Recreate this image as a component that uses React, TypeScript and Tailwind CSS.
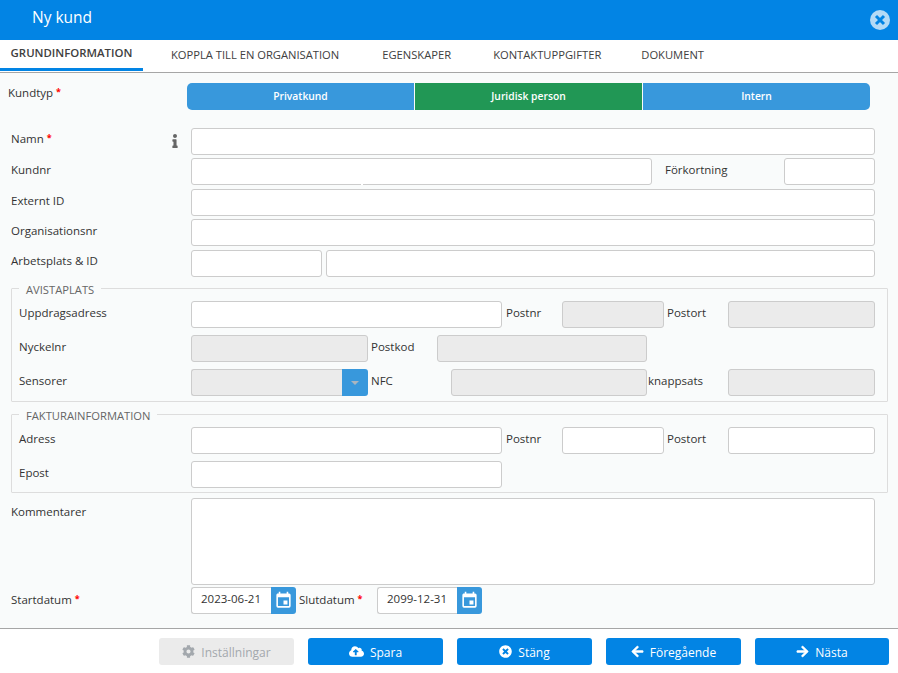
import React from 'react';
import { FaInfo, FaCog, FaCloudUploadAlt, FaTimesCircle, FaArrowLeft, FaArrowRight } from 'react-icons/fa';

const inputCls = 'h-[27px] rounded-[3px] border border-[#cccccc] bg-white';
const disabledCls = 'h-[27px] rounded-[3px] border border-[#cccccc] bg-[#ebebeb]';

function Req() {
  return <span className="ml-[3px] align-[2px] text-[9px] leading-none font-bold text-[#ff0000]">*</span>;
}

function CalendarButton() {
  return (
    <span className="flex h-[27px] w-[25px] shrink-0 items-center justify-center rounded-r-[3px] bg-[#3898dc]">
      <svg viewBox="0 0 24 24" className="h-[19px] w-[19px] fill-white">
        <path d="M19 19H5V8h14m-3-7v2H8V1H6v2H5c-1.11 0-2 .89-2 2v14a2 2 0 0 0 2 2h14a2 2 0 0 0 2-2V5a2 2 0 0 0-2-2h-1V1m-1 11h-5v5h5v-5z" />
      </svg>
    </span>
  );
}

function DateField({ value }: { value: string }) {
  return (
    <div className="flex">
      <div className="flex h-[27px] w-[80px] items-center rounded-l-[3px] border border-r-0 border-[#cccccc] bg-white pb-[4px] pl-[9px] text-[#333333]">
        {value}
      </div>
      <CalendarButton />
    </div>
  );
}

function FooterButton({ icon, label, width, disabled }: { icon: React.ReactNode; label: string; width: string; disabled?: boolean }) {
  return (
    <button
      className={
        disabled
          ? `flex h-[27px] ${width} items-center justify-center gap-[6px] rounded-[3px] bg-[#ebebeb] text-[12px] text-[#a3a8ad]`
          : `flex h-[27px] ${width} items-center justify-center gap-[6px] rounded-[3px] bg-[#0284e4] text-[12px] text-white`
      }
    >
      {icon}
      <span className="pt-[2px]">{label}</span>
    </button>
  );
}

export default function App() {
  return (
    <div className="flex h-[673px] w-[898px] flex-col overflow-hidden bg-white text-[11.5px] text-[#333333] [font-family:'Open_Sans','Noto_Sans',sans-serif]">
      <div className="flex h-[40px] shrink-0 items-start justify-between bg-[#0284e4] pl-[32px] pr-[8px]">
        <span className="mt-[7px] text-[15.5px] leading-[20px] text-white">Ny kund</span>
        <span className="mt-[10px] flex h-[20px] w-[20px] items-center justify-center rounded-full bg-[#b4daf6]">
          <svg viewBox="0 0 12 12" className="h-[12px] w-[12px] stroke-[#0284e4] [stroke-width:3]">
            <path d="M2 2l8 8M10 2l-8 8" />
          </svg>
        </span>
      </div>

      <div className="flex h-[33px] shrink-0 border-b border-[#a6a6a6] text-[11.2px] text-[#404040]">
        <div className="flex h-[31px] w-[143px] items-center justify-center border-b-[3px] border-[#0284e4] pb-[2px] text-[11.4px] font-semibold">
          GRUNDINFORMATION
        </div>
        <div className="ml-[28px] flex h-[31px] items-center">KOPPLA TILL EN ORGANISATION</div>
        <div className="ml-[43px] flex h-[31px] items-center">EGENSKAPER</div>
        <div className="ml-[42px] flex h-[31px] items-center">KONTAKTUPPGIFTER</div>
        <div className="ml-[40px] flex h-[31px] items-center">DOKUMENT</div>
      </div>

      <div className="flex-1 border-b border-[#a6a6a6] bg-[#f9fbfb]">
        <div className="mt-[10px] flex h-[27px]">
          <div className="w-[187px] pl-[8px] leading-[20px]">
            Kundtyp
            <Req />
          </div>
          <div className="flex w-[683px] text-[10.3px] font-semibold text-white">
            <div className="flex flex-1 items-center justify-center rounded-l-[5px] bg-[#3898dc]">Privatkund</div>
            <div className="ml-px flex flex-1 items-center justify-center bg-[#219755]">Juridisk person</div>
            <div className="ml-px flex flex-1 items-center justify-center rounded-r-[5px] bg-[#3898dc]">Intern</div>
          </div>
        </div>

        <div className="mt-[18px] flex">
          <div className="flex w-[191px] justify-between pl-[11px] pr-[12px] leading-[21px]">
            <span>
              Namn
              <Req />
            </span>
            <FaInfo className="mt-[6px] h-[14px] w-[8px] text-[#666666]" />
          </div>
          <div className={`${inputCls} w-[684px]`} />
        </div>

        <div className="mt-[3px] flex">
          <div className="w-[191px] pl-[11px] leading-[23px]">Kundnr</div>
          <div className={`${inputCls} relative w-[461px]`}>
            <span className="absolute bottom-[-1px] left-[169px] h-px w-[2px] bg-white" />
          </div>
          <div className="ml-[13px] w-[119px] leading-[23px]">Förkortning</div>
          <div className={`${inputCls} w-[91px]`} />
        </div>

        <div className="mt-[4px] flex">
          <div className="w-[191px] pl-[11px] leading-[23px]">Externt ID</div>
          <div className={`${inputCls} w-[684px]`} />
        </div>

        <div className="mt-[3px] flex">
          <div className="w-[191px] pl-[11px] leading-[23px]">Organisationsnr</div>
          <div className={`${inputCls} w-[684px]`} />
        </div>

        <div className="mt-[4px] flex">
          <div className="w-[191px] pl-[11px] leading-[22px]">Arbetsplats &amp; ID</div>
          <div className={`${inputCls} w-[131px]`} />
          <div className={`${inputCls} ml-[4px] w-[549px]`} />
        </div>

        <fieldset className="ml-[11px] mt-[1px] h-[124px] w-[877px] rounded-[1px] border border-[#dddddd] pl-[7px]">
          <legend className="h-[20px] px-[7px] text-[11.2px] leading-[24px] text-[#666666]">AVISTAPLATS</legend>
          <div className="mt-[3px] flex">
            <div className="w-[172px] leading-[24px]">Uppdragsadress</div>
            <div className={`${inputCls} w-[311px]`} />
            <div className="ml-[4px] w-[56px] leading-[24px]">Postnr</div>
            <div className={`${disabledCls} w-[102px]`} />
            <div className="ml-[3px] w-[61px] leading-[24px]">Postort</div>
            <div className={`${disabledCls} w-[147px]`} />
          </div>
          <div className="mt-[7px] flex">
            <div className="w-[172px] leading-[24px]">Nyckelnr</div>
            <div className={`${disabledCls} w-[177px]`} />
            <div className="ml-[3px] w-[66px] leading-[24px]">Postkod</div>
            <div className={`${disabledCls} w-[210px]`} />
          </div>
          <div className="mt-[7px] flex">
            <div className="w-[172px] leading-[24px]">Sensorer</div>
            <div className="flex h-[27px] w-[177px] rounded-[3px]">
              <div className="flex-1 rounded-l-[3px] border border-r-0 border-[#cccccc] bg-[#ebebeb]" />
              <div className="flex w-[26px] items-center justify-center rounded-r-[3px] bg-[#3898dc]">
                <span className="mt-px h-0 w-0 border-x-[4px] border-t-[4px] border-x-transparent border-t-[#a9b5bf]" />
              </div>
            </div>
            <div className="ml-[3px] w-[80px] leading-[24px]">NFC</div>
            <div className={`${disabledCls} w-[196px]`} />
            <div className="ml-px w-[80px] leading-[24px]">knappsats</div>
            <div className={`${disabledCls} w-[147px]`} />
          </div>
        </fieldset>

        <fieldset className="ml-[11px] mt-[2px] h-[89px] w-[877px] rounded-[1px] border border-[#dddddd] pl-[7px]">
          <legend className="h-[20px] px-[7px] text-[11.2px] leading-[24px] text-[#666666]">FAKTURAINFORMATION</legend>
          <div className="mt-[3px] flex">
            <div className="w-[172px] leading-[24px]">Adress</div>
            <div className={`${inputCls} w-[311px]`} />
            <div className="ml-[4px] w-[56px] leading-[24px]">Postnr</div>
            <div className={`${inputCls} w-[102px]`} />
            <div className="ml-[3px] w-[61px] leading-[24px]">Postort</div>
            <div className={`${inputCls} w-[147px]`} />
          </div>
          <div className="mt-[7px] flex">
            <div className="w-[172px] leading-[24px]">Epost</div>
            <div className={`${inputCls} w-[311px]`} />
          </div>
        </fieldset>

        <div className="mt-[5px] flex">
          <div className="w-[191px] pl-[11px] leading-[28px]">Kommentarer</div>
          <div className="h-[87px] w-[684px] rounded-[3px] border border-[#cccccc] bg-white" />
        </div>

        <div className="mt-[2px] flex">
          <div className="w-[191px] pl-[11px] leading-[25px]">
            Startdatum
            <Req />
          </div>
          <DateField value="2023-06-21" />
          <div className="ml-[3px] w-[78px] leading-[25px]">
            Slutdatum
            <Req />
          </div>
          <DateField value="2099-12-31" />
        </div>
      </div>

      <div className="flex h-[44px] shrink-0 items-start pl-[159px] pt-[9px]">
        <div className="flex gap-[14px]">
          <FooterButton disabled width="w-[135px]" label="Inställningar" icon={<FaCog className="h-[13px] w-[13px]" />} />
          <FooterButton width="w-[135px]" label="Spara" icon={<FaCloudUploadAlt className="h-[15px] w-[15px]" />} />
          <FooterButton width="w-[135px]" label="Stäng" icon={<FaTimesCircle className="h-[13px] w-[13px]" />} />
          <FooterButton width="w-[135px]" label="Föregående" icon={<FaArrowLeft className="h-[13px] w-[13px] stroke-current stroke-[20]" />} />
          <FooterButton width="w-[134px]" label="Nästa" icon={<FaArrowRight className="h-[13px] w-[13px] stroke-current stroke-[20]" />} />
        </div>
      </div>
    </div>
  );
}
